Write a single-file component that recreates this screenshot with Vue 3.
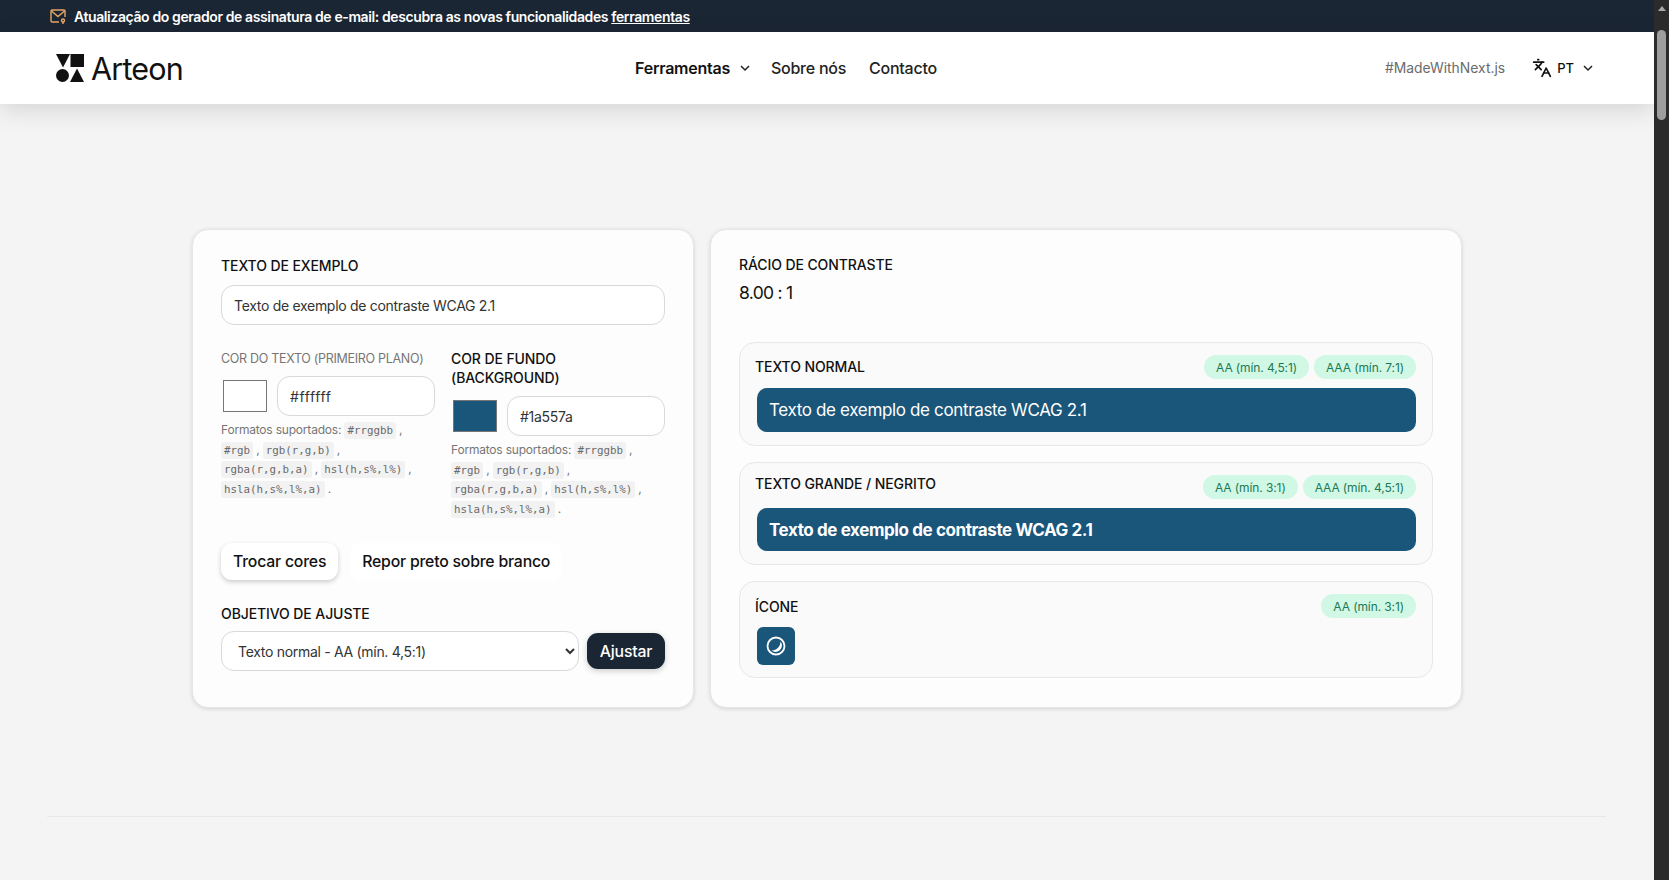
<script setup>
import { ref } from "vue";

const sampleText = ref("Texto de exemplo de contraste WCAG 2.1");
const formats = ["#rgb", "rgb(r,g,b)", "rgba(r,g,b,a)", "hsl(h,s%,l%)", "hsla(h,s%,l%,a)"];
const fgColor = ref("#ffffff");
const bgColor = ref("#1a557a");
const goal = ref("aa");
</script>

<template>
    <div class="shell">
        <div class="page">
            <div class="banner">
                <svg class="banner-icon" width="17" height="17" viewBox="0 0 17 17" fill="none" stroke="#e8a765" stroke-width="1.4">
                    <path d="M9 14H2.2A1.2 1.2 0 0 1 1 12.8V3.2A1.2 1.2 0 0 1 2.2 2h11.6A1.2 1.2 0 0 1 15 3.2V9" />
                    <path d="M1.5 3l6.5 5.5L14.5 3" />
                    <circle cx="13" cy="12.5" r="1.5" />
                    <path d="M13 14v2" />
                </svg>
                <span>Atualização do gerador de assinatura de e-mail: descubra as novas funcionalidades <a href="#">ferramentas</a></span>
            </div>

            <header class="nav">
                <div class="logo">
                    <svg width="28" height="28" viewBox="0 0 28 28" fill="#111">
                        <path d="M0 0h14L7 13.500z" />
                        <rect x="14.500" y="0" width="13.500" height="13" />
                        <circle cx="6.500" cy="21.500" r="6.500" />
                        <path d="M21 14.500L28 28H14z" />
                    </svg>
                    <span>Arteon</span>
                </div>
                <nav class="links">
                    <a class="active" href="#">Ferramentas
                        <svg width="14" height="14" viewBox="0 0 14 14" fill="none" stroke="#222" stroke-width="1.500"><path d="M3 5l4 4 4-4" /></svg>
                    </a>
                    <a href="#">Sobre nós</a>
                    <a href="#">Contacto</a>
                </nav>
                <div class="nav-right">
                    <span class="made">#MadeWithNext.js</span>
                    <div class="lang">
                        <svg width="20" height="20" viewBox="0 0 24 24" fill="none" stroke="#111" stroke-width="2" stroke-linecap="round" stroke-linejoin="round">
                            <path d="m5 8 6 6" />
                            <path d="m4 14 6-6 2-3" />
                            <path d="M2 5h12" />
                            <path d="M7 2h1" />
                            <path d="m22 22-5-10-5 10" />
                            <path d="M14 18h6" />
                        </svg>
                        <span>PT</span>
                        <svg width="14" height="14" viewBox="0 0 14 14" fill="none" stroke="#222" stroke-width="1.500"><path d="M3 5l4 4 4-4" /></svg>
                    </div>
                </div>
            </header>

            <main class="tool">
                <section class="card left">
                    <label class="label top-label">TEXTO DE EXEMPLO</label>
                    <input class="field" v-model="sampleText" />

                    <div class="colors">
                        <div class="color-col">
                            <label class="label muted small">COR DO TEXTO (PRIMEIRO PLANO)</label>
                            <div class="color-row">
                                <span class="swatch white"></span>
                                <input class="field spaced" v-model="fgColor" />
                            </div>
                            <p class="help">
                                Formatos suportados: <span class="fmt"><code>#rrggbb</code> ,</span>{{ " " }}
                                <template v-for="(f, i) in formats" :key="f">
                                    <span class="fmt"><code>{{ f }}</code> {{ i === formats.length - 1 ? "." : "," }}</span>{{ " " }}
                                </template>
                            </p>
                        </div>
                        <div class="color-col">
                            <label class="label two-line">COR DE FUNDO (BACKGROUND)</label>
                            <div class="color-row">
                                <span class="swatch blue"></span>
                                <input class="field" v-model="bgColor" />
                            </div>
                            <p class="help">
                                Formatos suportados: <span class="fmt"><code>#rrggbb</code> ,</span>{{ " " }}
                                <template v-for="(f, i) in formats" :key="f">
                                    <span class="fmt"><code>{{ f }}</code> {{ i === formats.length - 1 ? "." : "," }}</span>{{ " " }}
                                </template>
                            </p>
                        </div>
                    </div>

                    <div class="actions">
                        <button class="btn raised">Trocar cores</button>
                        <button class="btn plain">Repor preto sobre branco</button>
                    </div>

                    <label class="label goal-label">OBJETIVO DE AJUSTE</label>
                    <div class="goal">
                        <select class="field select" v-model="goal">
                            <option value="aa">Texto normal - AA (mín. 4,5:1)</option>
                            <option value="aaa">Texto normal - AAA (mín. 7:1)</option>
                        </select>
                        <button class="btn dark">Ajustar</button>
                    </div>
                </section>

                <section class="card right">
                    <div class="label">RÁCIO DE CONTRASTE</div>
                    <div class="ratio">8.00 : 1</div>

                    <div class="sample first">
                        <div class="sample-head">
                            <span class="label nudge">TEXTO NORMAL</span>
                            <div class="pills">
                                <span class="pill">AA (mín. 4,5:1)</span>
                                <span class="pill">AAA (mín. 7:1)</span>
                            </div>
                        </div>
                        <div class="preview">{{ sampleText }}</div>
                    </div>

                    <div class="sample">
                        <div class="sample-head">
                            <span class="label nudge up">TEXTO GRANDE / NEGRITO</span>
                            <div class="pills">
                                <span class="pill">AA (mín. 3:1)</span>
                                <span class="pill">AAA (mín. 4,5:1)</span>
                            </div>
                        </div>
                        <div class="preview bold">{{ sampleText }}</div>
                    </div>

                    <div class="sample last">
                        <div class="sample-head">
                            <span class="label nudge flat">ÍCONE</span>
                            <div class="pills">
                                <span class="pill">AA (mín. 3:1)</span>
                            </div>
                        </div>
                        <div class="icon-box">
                            <svg width="24" height="24" viewBox="0 0 24 24" fill="none">
                                <circle cx="12" cy="12" r="8.500" stroke="#fff" stroke-width="1.800" />
                                <path d="M16.500 7.500A6.400 6.400 0 0 1 7.500 16.500C12 16.800 16.300 13 16.500 7.500Z" fill="#fff" />
                            </svg>
                        </div>
                    </div>
                </section>
            </main>

            <div class="divider"></div>
        </div>

        <div class="scrollbar">
            <span class="arrow"></span>
            <span class="thumb"></span>
        </div>
    </div>
</template>

<style>
html,
body {
    margin: 0;
    height: 100%;
    overflow: hidden;
    background: #f4f4f4;
}
</style>

<style scoped>
* {
    box-sizing: border-box;
}

.shell {
    display: flex;
    height: 880px;
    font-family: Inter, "Liberation Sans", sans-serif;
    color: #111;
}

.page {
    flex: 1;
    min-width: 0;
    overflow: hidden;
    background: #f4f4f4;
}

.banner {
    height: 32px;
    background: #1b2634;
    color: #fff;
    display: flex;
    align-items: center;
    gap: 7px;
    padding-left: 50px;
    font-size: 14px;
    font-weight: 600;
    letter-spacing: -0.39px;
}

.banner a {
    color: #fff;
}

.nav {
    position: relative;
    height: 72px;
    background: #fff;
    box-shadow: 0 6px 24px rgba(0, 0, 0, 0.13);
    display: flex;
    align-items: center;
    justify-content: space-between;
    padding: 0 59px 0 56px;
}

.logo {
    display: flex;
    align-items: center;
    gap: 7px;
    font-size: 30.500px;
    letter-spacing: -0.8px;
    color: #111;
}

.links {
    display: flex;
    align-items: center;
    gap: 23px;
    margin-left: 4px;
    font-size: 16px;
    font-weight: 500;
    letter-spacing: -0.25px;
}

.links a {
    color: #222;
    text-decoration: none;
    display: flex;
    align-items: center;
    gap: 8px;
}

.links .active {
    font-weight: 600;
    color: #111;
    margin-right: -4px;
}

.nav-right {
    display: flex;
    align-items: center;
    gap: 27px;
}

.made {
    font-size: 13.900px;
    color: #6b6b6b;
}

.lang {
    display: flex;
    align-items: center;
    gap: 5px;
    font-size: 13px;
    font-weight: 500;
}

.lang span {
    margin-right: 2px;
}

.tool {
    display: flex;
    gap: 16px;
    padding: 125px 0 0 192px;
}

.card {
    height: 479px;
    background: #fdfdfd;
    border: 1px solid #e6e6e6;
    border-radius: 16px;
    box-shadow: 0 1px 4px rgba(0, 0, 0, 0.13);
    padding: 26px 28px;
}

.left {
    width: 502px;
}

.right {
    width: 752px;
    padding-top: 25px;
}

.label {
    display: block;
    font-size: 14px;
    line-height: 19px;
    font-weight: 450;
    letter-spacing: -0.1px;
    color: #111;
}

.muted {
    color: #767676;
    font-weight: 400;
}

.small {
    font-size: 12.500px;
    letter-spacing: -0.3px;
    white-space: nowrap;
}

.top-label {
    margin-bottom: 10px;
}

.field {
    display: block;
    width: 100%;
    height: 40px;
    background: #fff;
    border: 1px solid #d9d9d9;
    border-radius: 13px;
    padding: 0 12px;
    font-family: inherit;
    font-size: 14px;
    letter-spacing: -0.3px;
    color: #333;
    outline: none;
}

.spaced {
    letter-spacing: 0.6px;
}

.colors {
    display: grid;
    grid-template-columns: 214px 214px;
    gap: 16px;
    margin-top: 24px;
}

.color-row {
    display: flex;
    align-items: center;
    gap: 10px;
    margin-top: 8px;
    padding-left: 2px;
}

.two-line + .color-row {
    margin-top: 9px;
}

.swatch {
    flex: none;
    width: 44px;
    height: 32px;
    border: 1px solid #767676;
}

.white {
    background: #fff;
}

.blue {
    background: #1a557a;
}

.help {
    margin: 4px 0 0;
    font-size: 12px;
    line-height: 19.500px;
    color: #767676;
    letter-spacing: -0.2px;
}

.fmt {
    white-space: nowrap;
}

code {
    font-family: "DejaVu Sans Mono", monospace;
    font-size: 10.800px;
    line-height: 1;
    letter-spacing: 0;
    background: #f2f2f2;
    color: #6a6a6a;
    padding: 2px 3px;
    border-radius: 3px;
}

.actions {
    display: flex;
    gap: 12px;
    margin-top: 25px;
}

.btn {
    height: 37px;
    border: 0;
    border-radius: 11px;
    padding: 0 12px;
    font-family: inherit;
    font-size: 15.800px;
    font-weight: 500;
    letter-spacing: -0.2px;
    color: #111;
    background: #fff;
}

.raised {
    box-shadow: 0 2px 5px rgba(0, 0, 0, 0.2);
}

.goal-label {
    margin-top: 24px;
}

.goal {
    display: flex;
    align-items: center;
    gap: 8px;
    margin-top: 8px;
}

.select {
    flex: 1;
    min-width: 0;
}

.dark {
    flex: none;
    width: 78px;
    height: 36px;
    padding: 0;
    background: #1b2634;
    color: #fff;
    box-shadow: 0 2px 6px rgba(0, 0, 0, 0.2);
}

.ratio {
    margin-top: 7px;
    font-size: 17.500px;
    line-height: 24px;
    letter-spacing: -0.7px;
}

.sample {
    background: #fafafa;
    border: 1px solid #e8e8e8;
    border-radius: 16px;
    padding: 12px 16px 13px 17px;
    margin-top: 16px;
}

.first {
    margin-top: 37px;
}

.last {
    padding-bottom: 12px;
}

.sample-head {
    display: flex;
    justify-content: space-between;
    align-items: center;
    margin-bottom: 9px;
}

.nudge {
    margin-left: -2px;
    transform: translateY(-1px);
}

.up {
    transform: translateY(-4px);
}

.flat {
    transform: none;
}

.pills {
    display: flex;
    gap: 5px;
}

.pill {
    height: 24px;
    display: flex;
    align-items: center;
    padding: 0 12px;
    border-radius: 12px;
    background: #d1f7e5;
    color: #1a7a55;
    font-size: 12px;
    font-weight: 400;
    letter-spacing: -0.1px;
}

.preview {
    height: 44px;
    display: flex;
    align-items: center;
    padding: 0 12px;
    border-radius: 10px;
    background: #1a557a;
    color: #fff;
    font-size: 17px;
    letter-spacing: -0.35px;
}

.bold {
    height: 43px;
    font-weight: 700;
    letter-spacing: -0.4px;
}

.icon-box {
    width: 38px;
    height: 38px;
    border-radius: 6px;
    background: #1a557a;
    display: flex;
    align-items: center;
    justify-content: center;
}

.divider {
    height: 1px;
    margin: 108px 48px 0 47px;
    background: #e8e8e8;
}

.scrollbar {
    flex: none;
    width: 15px;
    background: #2b2b2b;
    display: flex;
    flex-direction: column;
    align-items: center;
}

.arrow {
    margin-top: 6px;
    border-left: 4px solid transparent;
    border-right: 4px solid transparent;
    border-bottom: 5px solid #a8a8a8;
}

.thumb {
    width: 9px;
    height: 90px;
    margin-top: 19px;
    border-radius: 5px;
    background: #9e9e9e;
}
</style>
